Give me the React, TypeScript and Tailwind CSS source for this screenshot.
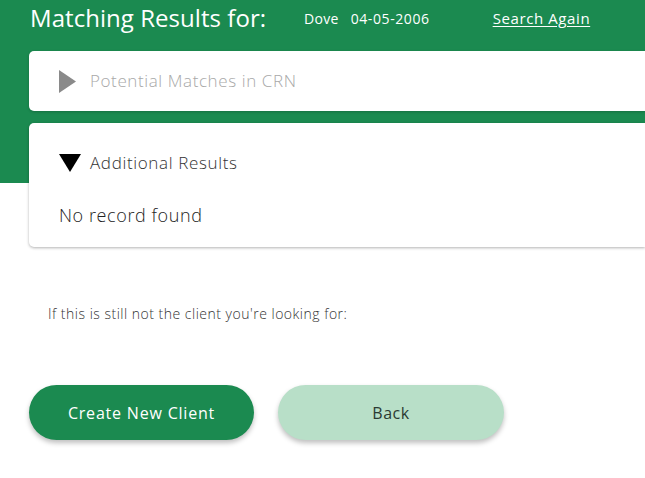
import React from "react";

export default function App() {
  const font = { fontFamily: '"Open Sans", "Liberation Sans", sans-serif' };
  return (
    <div className="relative w-[645px] h-[478px] overflow-hidden bg-white" style={font}>
      <div className="absolute left-0 top-0 w-full h-[183px] bg-[#1b8a50]" />
      <div className="relative">
        <div className="flex items-center h-[36px] pl-[30px]">
          <span className="text-white text-[24px] font-normal tracking-[0.05px] w-[274px]">Matching Results for:</span>
          <span className="text-white text-[14px] tracking-[0.3px] mr-[12px]">Dove</span>
          <span className="text-white text-[14px] tracking-[0.6px] w-[142px]">04-05-2006</span>
          <span className="text-white text-[15px] tracking-[0.6px] underline underline-offset-2">Search Again</span>
        </div>
        <div className="ml-[29px] mt-[15px] h-[60px] bg-white rounded-l-[5px] flex items-center pl-[30px] shadow-[0_1px_3px_rgba(0,0,0,0.2)]">
          <svg width="17" height="23" viewBox="0 0 17 23" className="mr-[14px]">
            <polygon points="0,0 17,11.5 0,23" fill="#8a8a8a" />
          </svg>
          <span className="text-[#a8a8a8] text-[17px] tracking-[0.6px] font-light">Potential Matches in CRN</span>
        </div>
        <div className="ml-[29px] mt-[12px] h-[124px] bg-white rounded-l-[5px] shadow-[0_1px_3px_rgba(0,0,0,0.3)] pl-[30px] pt-[28px]">
          <div className="flex items-center h-[24px]">
            <svg width="22" height="18" viewBox="0 0 22 18" className="mr-[9px]">
              <polygon points="0,0 22,0 11,18" fill="#000" />
            </svg>
            <span className="text-[#333] text-[17px] tracking-[0.65px] font-light">Additional Results</span>
          </div>
          <div className="mt-[27px] text-[#222] text-[18px] tracking-[0.6px] font-light">No record found</div>
        </div>
        <div className="pl-[48px] mt-[56px] text-[#333] text-[14px] tracking-[0.5px] font-light">If this is still not the client you're looking for:</div>
        <div className="flex gap-[24px] pl-[29px] mt-[61px]">
          <button className="w-[225px] h-[55px] rounded-full bg-[#1b8a50] text-white text-[16px] tracking-[0.8px] shadow-[0_3px_5px_rgba(0,0,0,0.25)]">Create New Client</button>
          <button className="w-[226px] h-[55px] rounded-full bg-[#b8dfc8] text-[#2a3a32] text-[16px] tracking-[0.5px] shadow-[0_3px_5px_rgba(0,0,0,0.25)]">Back</button>
        </div>
      </div>
    </div>
  );
}
